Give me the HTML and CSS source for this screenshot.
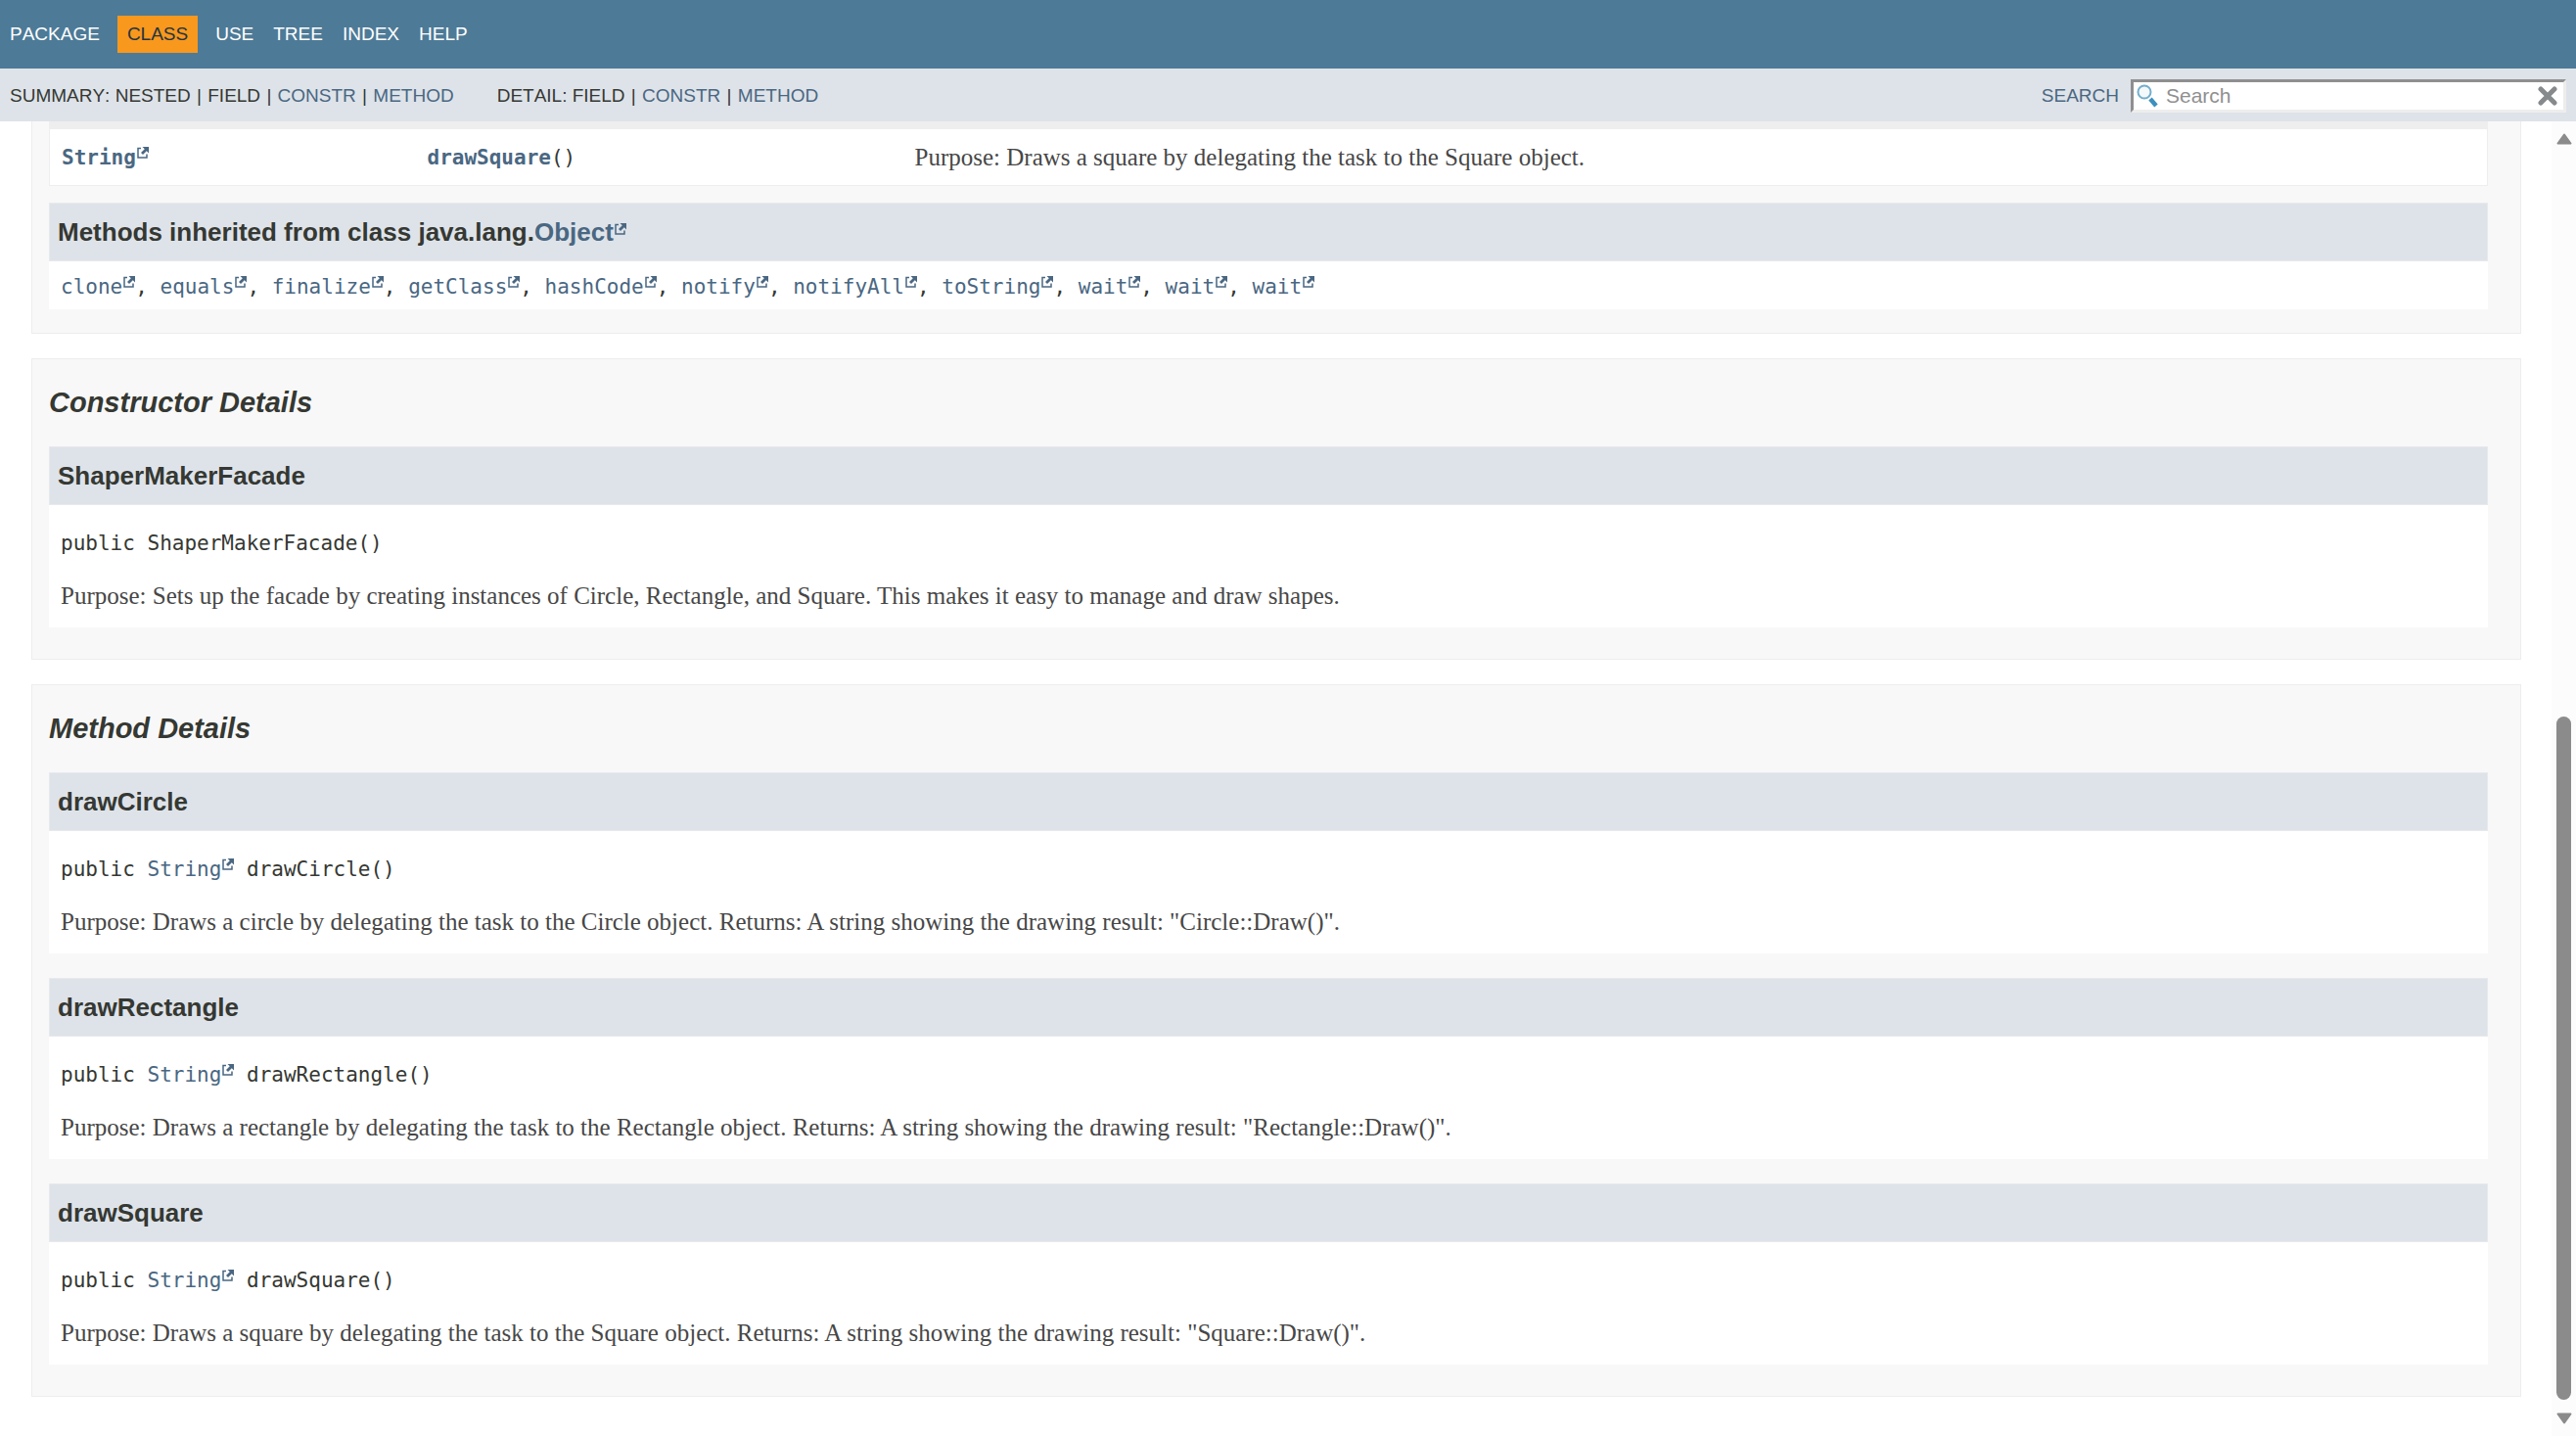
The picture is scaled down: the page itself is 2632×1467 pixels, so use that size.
FILE: index.html
```html
<!DOCTYPE html>
<html lang="en">
<head>
<meta charset="utf-8">
<title>ShaperMakerFacade</title>
<link rel="stylesheet" href="styles.css">
</head>
<body>
<svg class="sprite" aria-hidden="true">
  <symbol id="ext" viewBox="0 0 12 12"><path d="M4 1.500H1V11h9V7.500" fill="none" stroke="currentColor" stroke-width="1.500"/><path d="M5.500 0H12v6.500L9.800 4.300 6 8 4 6l3.800-3.800z" fill="currentColor"/></symbol>
</svg>
<header>
  <nav class="top-nav">
    <a href="#">PACKAGE</a>
    <a href="#" class="active">CLASS</a>
    <a href="#">USE</a>
    <a href="#">TREE</a>
    <a href="#">INDEX</a>
    <a href="#">HELP</a>
  </nav>
  <div class="sub-nav">
    <div>SUMMARY: NESTED <span class="sep">|</span> FIELD <span class="sep">|</span> <a href="#constructors">CONSTR</a> <span class="sep">|</span> <a href="#methods">METHOD</a></div>
    <div>DETAIL: FIELD <span class="sep">|</span> <a href="#constructors">CONSTR</a> <span class="sep">|</span> <a href="#methods">METHOD</a></div>
    <div class="search">
      <label for="search-input">SEARCH</label>
      <div class="search-box">
        <svg class="lens" viewBox="0 0 22 24"><circle cx="8" cy="8" r="6.500" fill="#f4f9fc" stroke="#74aecb" stroke-width="2"/><path d="M14 15l6 7" stroke="#3d8fbd" stroke-width="4.500"/></svg>
        <input id="search-input" type="text" placeholder="Search">
        <button type="reset" aria-label="Clear"><svg viewBox="0 0 20 20"><path d="M3 3l14 14M17 3L3 17" stroke="#868a8d" stroke-width="5" stroke-linecap="round"/></svg></button>
      </div>
    </div>
  </div>
</header>
<div class="viewport">
  <main>
    <section class="summary">
      <table>
        <tr>
          <td class="type"><code><a href="#">String<svg class="ext"><use href="#ext"/></svg></a></code></td>
          <td class="name"><code><a href="#drawSquare">drawSquare</a>()</code></td>
          <td>Purpose: Draws a square by delegating the task to the Square object.</td>
        </tr>
      </table>
      <h3>Methods inherited from class java.lang.<a href="#">Object<svg class="ext"><use href="#ext"/></svg></a></h3>
      <div class="inherited"><code><a href="#">clone<svg class="ext"><use href="#ext"/></svg></a>, <a href="#">equals<svg class="ext"><use href="#ext"/></svg></a>, <a href="#">finalize<svg class="ext"><use href="#ext"/></svg></a>, <a href="#">getClass<svg class="ext"><use href="#ext"/></svg></a>, <a href="#">hashCode<svg class="ext"><use href="#ext"/></svg></a>, <a href="#">notify<svg class="ext"><use href="#ext"/></svg></a>, <a href="#">notifyAll<svg class="ext"><use href="#ext"/></svg></a>, <a href="#">toString<svg class="ext"><use href="#ext"/></svg></a>, <a href="#">wait<svg class="ext"><use href="#ext"/></svg></a>, <a href="#">wait<svg class="ext"><use href="#ext"/></svg></a>, <a href="#">wait<svg class="ext"><use href="#ext"/></svg></a></code></div>
    </section>
    <section class="details" id="constructors">
      <h2>Constructor Details</h2>
      <article>
        <h3>ShaperMakerFacade</h3>
        <div class="detail">
          <code>public ShaperMakerFacade()</code>
          <p>Purpose: Sets up the facade by creating instances of Circle, Rectangle, and Square. This makes it easy to manage and draw shapes.</p>
        </div>
      </article>
    </section>
    <section class="details" id="methods">
      <h2>Method Details</h2>
      <article id="drawCircle">
        <h3>drawCircle</h3>
        <div class="detail">
          <code>public <a href="#">String<svg class="ext"><use href="#ext"/></svg></a> drawCircle()</code>
          <p>Purpose: Draws a circle by delegating the task to the Circle object. Returns: A string showing the drawing result: "Circle::Draw()".</p>
        </div>
      </article>
      <article id="drawRectangle">
        <h3>drawRectangle</h3>
        <div class="detail">
          <code>public <a href="#">String<svg class="ext"><use href="#ext"/></svg></a> drawRectangle()</code>
          <p>Purpose: Draws a rectangle by delegating the task to the Rectangle object. Returns: A string showing the drawing result: "Rectangle::Draw()".</p>
        </div>
      </article>
      <article id="drawSquare">
        <h3>drawSquare</h3>
        <div class="detail">
          <code>public <a href="#">String<svg class="ext"><use href="#ext"/></svg></a> drawSquare()</code>
          <p>Purpose: Draws a square by delegating the task to the Square object. Returns: A string showing the drawing result: "Square::Draw()".</p>
        </div>
      </article>
    </section>
  </main>
  <div class="scrollbar" aria-hidden="true">
    <svg class="arrow" viewBox="0 0 16 12"><path d="M8 1.500L14.500 10.500h-13z" fill="#8b8b8b" stroke="#8b8b8b" stroke-width="2" stroke-linejoin="round"/></svg>
    <div class="track"><div class="thumb"></div></div>
    <svg class="arrow" viewBox="0 0 16 12"><path d="M8 10.500L14.500 1.500h-13z" fill="#8b8b8b" stroke="#8b8b8b" stroke-width="2" stroke-linejoin="round"/></svg>
  </div>
</div>
</body>
</html>
```
FILE: styles.css
```css
* { box-sizing: border-box; }

body {
  display: flex;
  flex-direction: column;
  height: 100vh;
  margin: 0;
  overflow: hidden;
  background: #fff;
  color: #353833;
  font-family: "Liberation Sans", Arial, sans-serif;
  font-size: 19px;
}

a { color: #4a6782; text-decoration: none; }
h2, h3, p { margin: 0; }
.sprite { display: none; }

/* Header bars */
header { font-kerning: none; }
.top-nav {
  display: flex;
  align-items: center;
  height: 70px;
  background: #4d7a97;
}
.top-nav a { padding: 8px 10px; line-height: 22px; color: #fff; }
.top-nav .active { margin: 0 8px; background: #f8981d; color: #253441; }

.sub-nav {
  display: flex;
  align-items: center;
  gap: 44px;
  height: 54px;
  padding: 1px 10px 0;
  background: #dee3e9;
}
.sep { margin: 0 1px; }
.search {
  display: flex;
  align-items: center;
  gap: 12px;
  margin-left: auto;
  color: #4a6782;
}
.search-box {
  display: flex;
  align-items: center;
  width: 445px;
  height: 34px;
  padding: 0 6px 0 3px;
  border: 3px solid;
  border-color: #8f8f8f #ededed #ededed #8f8f8f;
  background: #fff;
}
.lens { width: 22px; height: 24px; }
.search-box input {
  flex: 1;
  min-width: 0;
  padding: 0 8px;
  border: 0;
  outline: 0;
  background: none;
  color: #353833;
  font: 21px "Liberation Sans", Arial, sans-serif;
}
.search-box input::placeholder { color: #909090; }
.search-box button { display: flex; padding: 0; border: 0; background: none; }
.search-box button svg { width: 20px; height: 22px; }

/* Page body */
.viewport { display: flex; flex: 1; min-height: 0; }
main {
  flex: 1;
  min-width: 0;
  padding: 0 31px 0 32px;
  overflow: hidden;
  font-family: "Liberation Serif", serif;
  font-size: 25px;
  color: #474747;
}
section {
  margin-bottom: 25px;
  padding: 0 33px 32px 17px;
  border: 1px solid #ededed;
  background: #f8f8f8;
}
.summary { padding-bottom: 24px; border-top: 0; }

code {
  color: #353833;
  font-family: "DejaVu Sans Mono", monospace;
  font-size: 21px;
}
.ext { width: 12px; height: 12px; margin: 0 0 6px 1px; }

table {
  width: 100%;
  margin-bottom: 17px;
  border: 1px solid #eee;
  border-top: 8px solid #eee;
  border-spacing: 0;
  background: #fff;
  table-layout: fixed;
}
td { height: 57px; padding: 0 12px; line-height: 33px; }
.type { width: 15%; }
.name { width: 20%; }
td a { font-weight: bold; }

h3 {
  padding: 0 8px;
  border: 1px solid #e8e9ed;
  background: #dee3e9;
  color: #353833;
  font: bold 26px/58px "Liberation Sans", Arial, sans-serif;
}
.inherited { height: 49px; padding: 0 12px; background: #fff; line-height: 49px; }

h2 {
  color: #353833;
  font: italic bold 29px/89px "Liberation Sans", Arial, sans-serif;
}
article + article { margin-top: 25px; }
.detail {
  display: flex;
  flex-direction: column;
  gap: 24px;
  height: 125px;
  padding: 24px 12px 0;
  background: #fff;
  line-height: 30px;
}

/* Scroll bar */
.scrollbar {
  display: flex;
  flex-direction: column;
  align-items: center;
  width: 25px;
  padding: 12px 0;
  background: #fcfcfc;
}
.arrow { width: 16px; height: 12px; }
.track { display: flex; flex: 1; align-items: flex-end; padding: 13px 0; }
.thumb { width: 15px; height: 55%; border-radius: 8px; background: #8b8b8b; }
```
